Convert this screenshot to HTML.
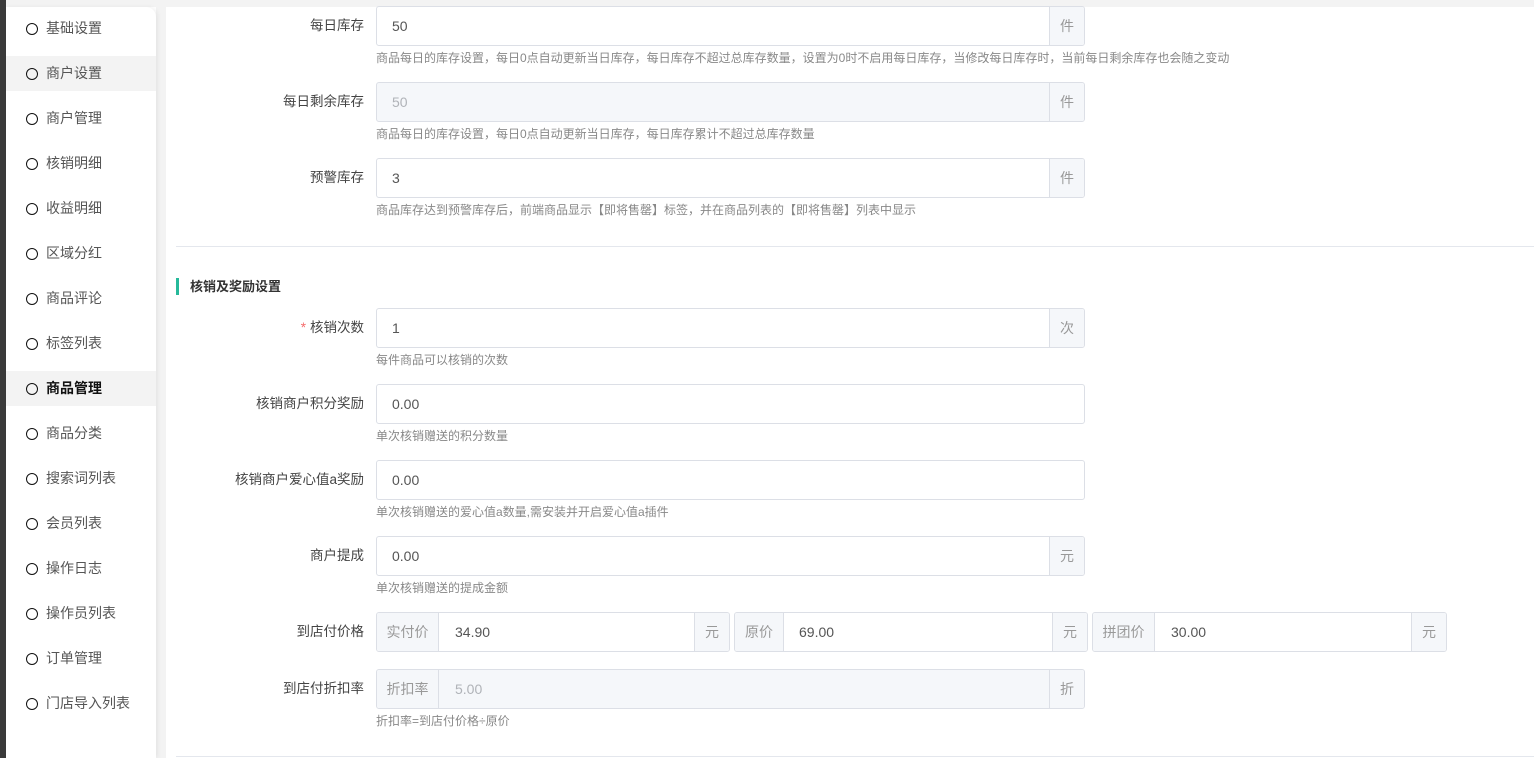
<!DOCTYPE html>
<html><head><meta charset="utf-8"><style>
*{box-sizing:border-box;margin:0;padding:0}
body{width:1534px;height:758px;overflow:hidden;background:#fff;font-family:"Liberation Sans","Noto Sans CJK SC",sans-serif;position:relative}
.dark{position:absolute;left:0;top:0;width:6px;height:758px;background:#3a3a3a}
.topband{position:absolute;left:6px;top:0;width:1528px;height:7px;background:#f3f3f3}
.gap{position:absolute;left:156px;top:0;width:10px;height:758px;background:#f3f3f3}
.side{position:absolute;left:6px;top:7px;width:150px;height:751px;background:#fff;border-top-right-radius:10px;box-shadow:2px 0 4px rgba(0,0,0,.06)}
.item{position:absolute;left:0;width:150px;height:35px;font-size:14px;color:#555;line-height:35px;padding-left:40px}
.item.on{background:#f3f3f3}
.item.b{font-weight:bold;color:#111}
.item::before{content:"";position:absolute;left:20px;top:12px;width:10px;height:10px;border:1.8px solid #111;border-radius:50%}
.lab{position:absolute;width:200px;left:164px;text-align:right;font-size:13.5px;color:#444;line-height:40px}
.lab .s{color:#f56c6c;margin-right:4px}
.inp{position:absolute;height:40px;border:1px solid #dcdfe6;border-radius:3px;background:#fff;font-size:14px;color:#555;line-height:38px;overflow:hidden}
.inp.dis{background:#f5f7fa;color:#b0b3b8}
.inp .v{position:absolute;left:15px;top:0}
.inp .u{position:absolute;right:0;top:0;width:35px;height:38px;background:#f5f7fa;border-left:1px solid #dcdfe6;text-align:center;color:#999}
.inp .p{position:absolute;left:0;top:0;width:62px;height:38px;background:#f5f7fa;border-right:1px solid #dcdfe6;text-align:center;color:#999}
.help{position:absolute;left:376px;font-size:12px;color:#888;line-height:14px}
.hr{position:absolute;left:176px;width:1358px;height:1px;background:#e4e7ed}
.title{position:absolute;left:176px;top:278px;height:17px;border-left:3px solid #26b99a;padding-left:11px;font-size:13px;font-weight:bold;color:#333;line-height:17px}
</style></head><body>
<div class="dark"></div><div class="topband"></div><div class="gap"></div>
<div class="side">
<div class="item" style="top:4px">基础设置</div>
<div class="item on" style="top:49px">商户设置</div>
<div class="item" style="top:94px">商户管理</div>
<div class="item" style="top:139px">核销明细</div>
<div class="item" style="top:184px">收益明细</div>
<div class="item" style="top:229px">区域分红</div>
<div class="item" style="top:274px">商品评论</div>
<div class="item" style="top:319px">标签列表</div>
<div class="item on b" style="top:364px">商品管理</div>
<div class="item" style="top:409px">商品分类</div>
<div class="item" style="top:454px">搜索词列表</div>
<div class="item" style="top:499px">会员列表</div>
<div class="item" style="top:544px">操作日志</div>
<div class="item" style="top:589px">操作员列表</div>
<div class="item" style="top:634px">订单管理</div>
<div class="item" style="top:679px">门店导入列表</div>
</div>

<div class="lab" style="top:6px">每日库存</div>
<div class="inp" style="left:376px;top:6px;width:709px"><span class="v">50</span><span class="u">件</span></div>
<div class="help" style="top:51px">商品每日的库存设置，每日0点自动更新当日库存，每日库存不超过总库存数量，设置为0时不启用每日库存，当修改每日库存时，当前每日剩余库存也会随之变动</div>

<div class="lab" style="top:82px">每日剩余库存</div>
<div class="inp dis" style="left:376px;top:82px;width:709px"><span class="v">50</span><span class="u">件</span></div>
<div class="help" style="top:127px">商品每日的库存设置，每日0点自动更新当日库存，每日库存累计不超过总库存数量</div>

<div class="lab" style="top:158px">预警库存</div>
<div class="inp" style="left:376px;top:158px;width:709px"><span class="v">3</span><span class="u">件</span></div>
<div class="help" style="top:203px">商品库存达到预警库存后，前端商品显示【即将售罄】标签，并在商品列表的【即将售罄】列表中显示</div>

<div class="hr" style="top:246px"></div>
<div class="title">核销及奖励设置</div>

<div class="lab" style="top:308px"><span class="s">*</span>核销次数</div>
<div class="inp" style="left:376px;top:308px;width:709px"><span class="v">1</span><span class="u">次</span></div>
<div class="help" style="top:353px">每件商品可以核销的次数</div>

<div class="lab" style="top:384px">核销商户积分奖励</div>
<div class="inp" style="left:376px;top:384px;width:709px"><span class="v">0.00</span></div>
<div class="help" style="top:429px">单次核销赠送的积分数量</div>

<div class="lab" style="top:460px">核销商户爱心值a奖励</div>
<div class="inp" style="left:376px;top:460px;width:709px"><span class="v">0.00</span></div>
<div class="help" style="top:505px">单次核销赠送的爱心值a数量,需安装并开启爱心值a插件</div>

<div class="lab" style="top:536px">商户提成</div>
<div class="inp" style="left:376px;top:536px;width:709px"><span class="v">0.00</span><span class="u">元</span></div>
<div class="help" style="top:581px">单次核销赠送的提成金额</div>

<div class="lab" style="top:612px">到店付价格</div>
<div class="inp" style="left:376px;top:612px;width:354px"><span class="p">实付价</span><span class="v" style="left:78px">34.90</span><span class="u">元</span></div>
<div class="inp" style="left:734px;top:612px;width:354px"><span class="p" style="width:49px">原价</span><span class="v" style="left:64px">69.00</span><span class="u">元</span></div>
<div class="inp" style="left:1092px;top:612px;width:355px"><span class="p">拼团价</span><span class="v" style="left:78px">30.00</span><span class="u">元</span></div>

<div class="lab" style="top:669px">到店付折扣率</div>
<div class="inp dis" style="left:376px;top:669px;width:709px"><span class="p">折扣率</span><span class="v" style="left:78px">5.00</span><span class="u">折</span></div>
<div class="help" style="top:714px">折扣率=到店付价格÷原价</div>

<div class="hr" style="top:756px"></div>
</body></html>
